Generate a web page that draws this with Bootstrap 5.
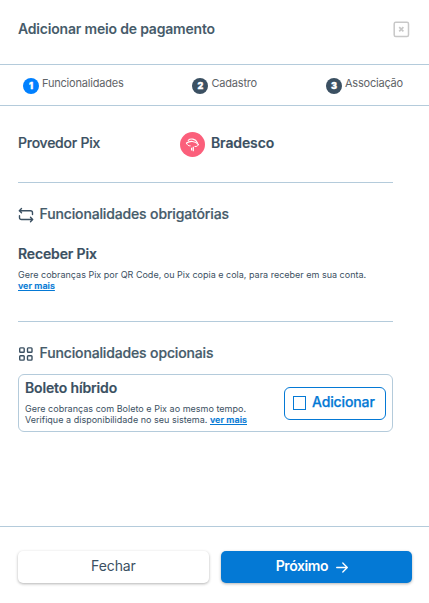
<!DOCTYPE html>
<html lang="pt-BR">
<head>
<meta charset="utf-8">
<meta name="viewport" content="width=device-width, initial-scale=1">
<title>Adicionar meio de pagamento</title>
<link href="https://cdn.jsdelivr.net/npm/bootstrap@5.3.0/dist/css/bootstrap.min.css" rel="stylesheet">
<style>
:root{--ink:#3b5062;--ink-soft:#465b6a;--line:#b4cbdb;--brand:#0479d5}
body{font-family:Inter,"Liberation Sans",sans-serif;font-size:14px;line-height:20px;color:var(--ink);background:#fff}
.pay-modal{height:603px;overflow:hidden}
.pay-head{height:65px;padding:0 19px 6px 18px;border-bottom:1px solid var(--line)}
.pay-title{font-size:14px;line-height:20px;font-weight:600;letter-spacing:-.19px;color:var(--ink-soft)}
.pay-steps{height:41px;padding:0 26px 0 23px;border-bottom:1px solid var(--line)}
.step-item{font-size:11px;line-height:16px;color:#5f6468;gap:3px;letter-spacing:-.2px}
.step-num{width:16px;height:16px;margin-top:1px;background:var(--ink);color:#fff;font-size:9px;font-weight:900;line-height:15px;letter-spacing:0;-webkit-text-stroke:.3px #fff}
.step-item.current .step-num{background:#0080ff}
.step-text{margin-top:-4px}
.pay-body{padding:0 36px 0 18px}
.provider{height:76px}
.provider-label{width:162px;font-weight:500;letter-spacing:-.24px;margin-top:-3px;-webkit-text-stroke:.2px}
.bank-name{margin:-3px 0 0 6px;letter-spacing:-.12px;-webkit-text-stroke:.15px}
.rule{height:1px;background:var(--line)}
.section-title{font-size:14px;line-height:20px;font-weight:500;gap:6px;letter-spacing:-.15px;color:var(--ink-soft);-webkit-text-stroke:.2px}
.section-title svg{margin-top:2px}
.section-title span{margin-left:-.4px}
.feature-title{font-size:14px;line-height:20px;font-weight:600;letter-spacing:-.15px;-webkit-text-stroke:.15px}
.feature-text{font-size:9px;line-height:11px;letter-spacing:.005px}
.feature-text a{color:var(--brand);font-weight:600;-webkit-text-stroke:.15px}
.required-block{height:138px;padding-top:21px}
.required-block .feature-title{padding-top:4px}
.required-block .feature-text{margin-top:5px}
.optional-block{padding-top:21px}
.option-box{height:58px;border:1px solid var(--line);border-radius:6px;margin-top:11px;padding:0 6px}
.option-copy{margin-top:-3px}
.option-copy .feature-text{margin-top:5px;letter-spacing:.02px}
.btn-add{width:102px;height:33px;border:1px solid var(--brand);border-radius:6px;color:var(--brand);font-size:14px;line-height:20px;font-weight:500;letter-spacing:-.13px;padding:0 0 2px 8px;gap:6px;-webkit-text-stroke:.25px}
.check-box{width:13px;height:14px;border:1px solid var(--brand);margin-top:2px}
.pay-foot{height:77px;border-top:1px solid var(--line);padding:24px 17px 0 18px;gap:12px}
.pay-foot .btn{height:32px;border:0;border-radius:5px;font-size:14px;line-height:20px;padding:0 0 2px;box-shadow:0 1px 3px rgba(0,0,0,.3)}
.btn-close-modal{background:#fff;color:var(--ink);letter-spacing:-.1px}
.pay-foot .btn-next,.pay-foot .btn-next:hover{background:var(--brand);color:#fff;font-weight:600;letter-spacing:-.42px;padding-right:9px}
</style>
</head>
<body>
<main class="pay-modal d-flex flex-column">
  <header class="pay-head d-flex align-items-center justify-content-between">
    <h1 class="pay-title mb-0">Adicionar meio de pagamento</h1>
    <svg width="17" height="17" viewBox="0 0 17 17" fill="none" stroke="#c8c8c8" aria-label="Fechar"><rect x="1.200" y="1.200" width="14.300" height="14.300" rx="1.500" stroke-width="1.500"/><path d="M6.200 6.200l4.200 4.200M10.400 6.200L6.200 10.400" stroke-width="1.700"/></svg>
  </header>
  <nav class="pay-steps d-flex align-items-center justify-content-between">
    <div class="step-item current d-flex align-items-center"><span class="step-num rounded-circle text-center">1</span><span class="step-text">Funcionalidades</span></div>
    <div class="step-item d-flex align-items-center"><span class="step-num rounded-circle text-center">2</span><span class="step-text">Cadastro</span></div>
    <div class="step-item d-flex align-items-center"><span class="step-num rounded-circle text-center">3</span><span class="step-text">Associação</span></div>
  </nav>
  <section class="pay-body flex-grow-1">
    <div class="provider d-flex align-items-center">
      <span class="provider-label">Provedor Pix</span>
      <svg width="25" height="25" viewBox="0 0 25 25" fill="none" stroke="#fff" stroke-linecap="round"><circle cx="12.500" cy="12.500" r="12.500" fill="#fb5f7b" stroke="none"/><path d="M8.200 8.300C10.500 6 15.500 6.700 17.400 10.700" stroke-width="1.100"/><path d="M6.500 11.100C9.500 8.800 15 8.700 18.300 12.300" stroke-width="1.200"/><path d="M6.500 11.300c.9 1.900 2 2.700 3.700 2.600M18.400 12.300c-.2 1.600-1.400 2.400-3.400 2.200" stroke-width="1"/><path d="M11.600 15.800v2.600M13.300 14.800v4.400" stroke-width="1.200" stroke-linecap="butt"/></svg>
      <span class="bank-name fw-semibold">Bradesco</span>
    </div>
    <div class="rule"></div>
    <div class="required-block">
      <h2 class="section-title d-flex align-items-center mb-0">
        <svg width="16" height="16" viewBox="0 0 16 16" fill="none" stroke="#3b5062" stroke-width="1.400" stroke-linecap="round" stroke-linejoin="round"><path d="M3.500 1.500L1.300 3.700l2.200 2.100M1.500 3.700H12.500Q14.500 3.700 14.500 5.700V7.500M12.500 10.300l2.200 2.200-2.200 2.200M14.500 12.500H3.500Q1.500 12.500 1.500 10.500V8.700"/></svg>
        <span>Funcionalidades obrigatórias</span>
      </h2>
      <h3 class="feature-title mt-3 mb-0">Receber Pix</h3>
      <p class="feature-text mb-0">Gere cobranças Pix por QR Code, ou Pix copia e cola, para receber em sua conta.<br><a href="#">ver mais</a></p>
    </div>
    <div class="rule"></div>
    <div class="optional-block">
      <h2 class="section-title d-flex align-items-center mb-0">
        <svg width="16" height="16" viewBox="0 0 16 16" fill="none" stroke="#3b5062" stroke-width="1.400"><rect x="1.700" y="1.900" width="4.500" height="4.400" rx=".8"/><rect x="9.500" y="1.900" width="4.500" height="4.400" rx=".8"/><rect x="1.700" y="9.700" width="4.500" height="4.400" rx=".8"/><rect x="9.500" y="9.700" width="4.500" height="4.400" rx=".8"/></svg>
        <span>Funcionalidades opcionais</span>
      </h2>
      <div class="option-box d-flex align-items-center justify-content-between">
        <div class="option-copy">
          <h3 class="feature-title mb-0">Boleto híbrido</h3>
          <p class="feature-text mb-0 text-nowrap">Gere cobranças com Boleto e Pix ao mesmo tempo.<br>Verifique a disponibilidade no seu sistema. <a href="#">ver mais</a></p>
        </div>
        <button class="btn btn-add d-flex align-items-center" type="button"><span class="check-box"></span>Adicionar</button>
      </div>
    </div>
  </section>
  <footer class="pay-foot d-flex">
    <button class="btn btn-close-modal flex-fill w-50" type="button">Fechar</button>
    <button class="btn btn-next flex-fill w-50 d-flex align-items-center justify-content-center gap-2" type="button">Próximo
      <svg width="12" height="12" viewBox="0 0 12 12" fill="none" stroke="#fff" stroke-width="1.300" stroke-linecap="round" stroke-linejoin="round" class="mt-1"><path d="M.7 5.500H11.200M6.800 1L11.300 5.500l-4.500 4.500"/></svg>
    </button>
  </footer>
</main>
<script src="https://cdn.jsdelivr.net/npm/bootstrap@5.3.0/dist/js/bootstrap.bundle.min.js"></script>
</body>
</html>
